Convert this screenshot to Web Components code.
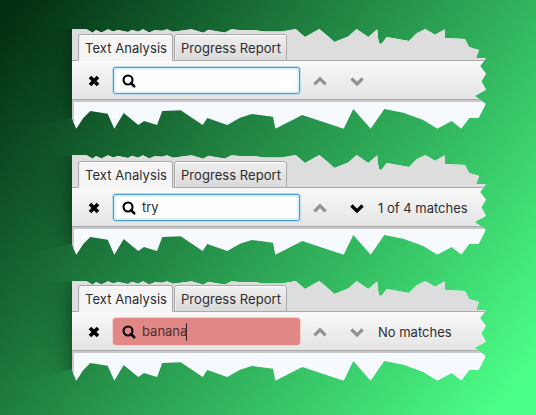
<!DOCTYPE html>
<html lang="en">
<head>
<meta charset="utf-8">
<title>Search bar states</title>
<style>
body{margin:0;width:536px;height:415px;overflow:hidden;font:13px Inter,"Liberation Sans",sans-serif;color:#2c2c2e;background:linear-gradient(127.6deg,#032f12 2.5%,#4cff88 95.5%)}
</style>
</head>
<body>
<state-gallery>
  <torn-window style="--line:31px">
    <tab-label slot="tabs" active>Text Analysis</tab-label><tab-label slot="tabs">Progress Report</tab-label>
    <find-bar slot="bar"></find-bar>
  </torn-window>
  <torn-window style="--line:32px">
    <tab-label slot="tabs" active>Text Analysis</tab-label><tab-label slot="tabs">Progress Report</tab-label>
    <find-bar slot="bar" can-next>try<span slot="status">1 of 4 matches</span></find-bar>
  </torn-window>
  <torn-window style="--line:30px">
    <tab-label slot="tabs" active>Text Analysis</tab-label><tab-label slot="tabs">Progress Report</tab-label>
    <find-bar slot="bar" missing>banana<span slot="status">No matches</span></find-bar>
  </torn-window>
</state-gallery>
<script>
const define=(name,html)=>customElements.define(name,class extends HTMLElement{
  constructor(){super();this.attachShadow({mode:'open'}).innerHTML=html;}
});

define('state-gallery',`<style>
:host{display:flex;flex-direction:column;gap:26px;box-sizing:border-box;width:536px;height:415px;padding:29px 50px 0 72px}
</style><slot></slot>`);

// Torn outline in panel pixels; the left side extends outwards so the shadow stays visible.
const outline=[[-72,0],[14.5,.2],[16.5,1.2],[20.5,3.7],[24,1],[29.5,3.5],[36,.3],[41,2.6],[46,1],[56,3],[60,.8],[66,2.7],[71,.3],[77.3,3.6],[83,1],[89.6,1.7],[95,.3],[101,2.7],[119.6,.2],[131.3,3.7],[136.5,.7],[146,2.4],[153,3.5],[159.5,.3],[170,1.2],[182,1],[192,2.4],[210,2.6],[223.7,0],[233,8],[247.3,0],[256.3,7.4],[262.3,13],[276.3,7.5],[284.6,0],[296.3,8],[305.2,.2],[306,9],[307.2,14],[308.3,15],[310.2,14],[314.7,8],[337,12],[344.7,4.3],[353.3,0],[363,5.7],[373,.2],[373,9],[393,10],[397,18],[407,21],[404.2,29],[414,29.2],[408,37],[414,44.7],[409.3,52.3],[414,60.7],[402.7,67],[414,74.7],[406.7,89],[397.3,89],[389.3,99.8],[379.7,92],[365.3,99.8],[351.3,91],[331.3,83.7],[312.3,80],[298.7,99.8],[281.3,80],[271.7,99.8],[230.3,86],[203.3,99.8],[201,87.7],[179.7,85],[168,88.7],[155.3,96],[135.3,89],[130.7,96],[108.7,81.2],[90.3,82],[85,96],[72,92],[66.3,96],[51.7,84],[42.3,99.8],[35.7,84.7],[18.3,82],[11.3,89],[4.3,99.8],[1.3,93],[0,88.5],[-40,97],[-72,101]];
const clip=outline.map(p=>p[0]+'px '+p[1]+'px').join(',');
define('torn-window',`<style>
:host{display:block;width:414px;height:100px;flex:none;clip-path:polygon(${clip})}
.window{height:100px;display:flex;flex-direction:column;background:#f6faff;box-shadow:0 0 32px rgba(0,20,5,.5),0 0 8px rgba(0,20,5,.25)}
.tabs{box-sizing:border-box;height:calc(var(--line) + 1px);flex:none;display:flex;align-items:flex-end;gap:1px;padding-left:6px;background:linear-gradient(#aaa,#aaa) bottom/100% 1px no-repeat #ddd}
.page{flex:1;box-sizing:border-box;border-top:2px solid #c8c8c8;border-left:2px solid #c8c8c8}
</style><div class="window"><div class="tabs"><slot name="tabs"></slot></div><slot name="bar"></slot><div class="page"></div></div>`);

define('tab-label',`<style>
:host{display:block;box-sizing:border-box;width:113px;height:27px;padding-left:1px;border:1px solid #aaa;border-radius:3px 3px 0 0;background:linear-gradient(#f0f0f0,#d9d9d9);box-shadow:inset 0 1px #fff,inset 1px 0 #eee;line-height:27px;text-align:center;white-space:nowrap;letter-spacing:.06px}
:host([active]){width:95px;background:#f5f5f5;border-bottom-color:#f5f5f5}
</style><slot></slot>`);

define('find-bar',`<style>
:host{display:flex;align-items:center;box-sizing:border-box;height:39px;flex:none;padding:1px 0 0 15.5px;border-bottom:1px solid #aaa;background:linear-gradient(#f9f9f9,#e4e4e4)}
svg{display:block;flex:none;margin-top:1px}
.field{display:flex;align-items:center;box-sizing:border-box;width:187px;height:27px;margin-left:13.5px;padding-left:8px;border:1px solid #489fcc;border-radius:3px;background:#fff;box-shadow:0 0 0 1px #b8dae9,inset 0 0 0 2px #e0f0f8;gap:6px;line-height:19px}
.value{display:flex;align-items:center}
.caret{display:none;width:1px;height:18px;margin-left:-1px;background:#35292b}
:host([missing]) .field{background:#e18785;border-color:#e18785;box-shadow:0 0 0 1px #efd3d2}
:host([missing]) .value{color:#493032}
:host([missing]) .caret{display:block}
.prev{margin-left:12.4px}.next{margin-left:21px}
.chev{fill:none;stroke:#929292;stroke-width:3.2}
:host([can-next]) .next{stroke:#000}
.status{margin-left:12.6px;padding-top:1px;white-space:nowrap}
</style>
<svg width="12" height="12" viewBox="0 0 12 12"><path d="M2 2L10 10M10 2L2 10" stroke="#000" stroke-width="3.7"/></svg>
<div class="field"><svg width="14" height="14" viewBox="0 0 14 14" fill="none" stroke="#000"><circle cx="6" cy="6" r="4.5" stroke-width="2.1"/><path d="M9 9L12.3 12.3" stroke-width="2.5" stroke-linecap="round"/></svg><span class="value"><slot></slot><i class="caret"></i></span></div>
<svg class="chev prev" width="16" height="12" viewBox="0 0 16 12"><path d="M2.4 9.3L8 3.8L13.6 9.3"/></svg>
<svg class="chev next" width="16" height="12" viewBox="0 0 16 12"><path d="M2.4 3.5L8 9L13.6 3.5"/></svg>
<span class="status"><slot name="status"></slot></span>`);
</script>
</body>
</html>
